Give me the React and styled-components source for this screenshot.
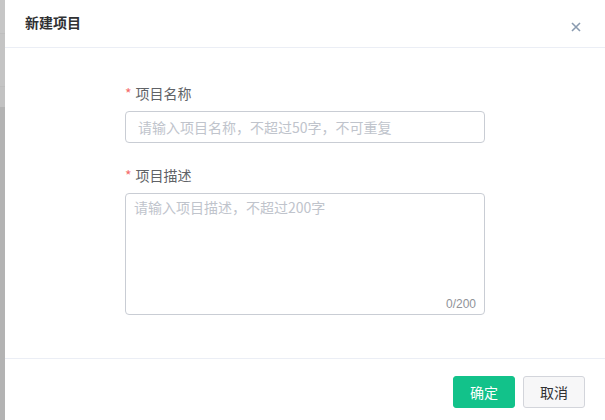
import React from "react";
import styled, { createGlobalStyle } from "styled-components";

const GlobalStyle = createGlobalStyle`
  html, body {
    margin: 0;
    padding: 0;
    background: #ffffff;
  }
  body {
    font-family: "Noto Sans CJK SC", "Noto Sans", "Liberation Sans", sans-serif;
  }
`;

const Page = styled.div`
  display: flex;
  width: 605px;
  height: 420px;
  overflow: hidden;
`;

const Backdrop = styled.div`
  width: 5px;
  flex-shrink: 0;
  background: linear-gradient(
    to bottom,
    #c6c6c6 0,
    #c6c6c6 33px,
    #b8b8b8 33px,
    #c4c4c4 34px,
    #c4c4c4 86px,
    #b8b8b8 86px,
    #c2c2c2 87px,
    #c2c2c2 107px,
    #b3b3b3 107px,
    #b3b3b3 100%
  );
`;

const Dialog = styled.div`
  flex: 1;
  display: flex;
  flex-direction: column;
  background: #ffffff;
`;

const Header = styled.div`
  display: flex;
  align-items: center;
  justify-content: space-between;
  height: 47px;
  padding: 0 23px 0 20px;
  border-bottom: 1px solid #ebeef5;
`;

const Title = styled.div`
  font-size: 14px;
  font-weight: bold;
  color: #303133;
  line-height: 20px;
  margin-top: -3px;
`;

const Close = styled.button`
  display: flex;
  align-items: center;
  justify-content: center;
  width: 12px;
  height: 12px;
  padding: 0;
  margin-top: 6px;
  border: none;
  background: none;
  cursor: pointer;
`;

const Body = styled.div`
  flex: 1;
  display: flex;
  justify-content: center;
  padding-top: 35px;
`;

const Form = styled.div`
  display: flex;
  flex-direction: column;
  width: 360px;
`;

const Field = styled.div`
  display: flex;
  flex-direction: column;
  margin-bottom: ${(p) => p.$gap || 0}px;
`;

const Label = styled.label`
  font-size: 14px;
  line-height: 20px;
  color: #606266;
  margin-bottom: 8px;
  &::before {
    content: "*";
    color: #f56c6c;
    margin-right: 4px;
  }
`;

const Input = styled.input`
  box-sizing: border-box;
  height: 32px;
  width: 100%;
  padding: 0 12px;
  border: 1px solid #c9cdd4;
  border-radius: 4px;
  font-family: inherit;
  font-size: 14px;
  color: #606266;
  outline: none;
  &::placeholder {
    color: #c0c4cc;
  }
`;

const AreaWrap = styled.div`
  position: relative;
`;

const TextArea = styled.textarea`
  display: block;
  box-sizing: border-box;
  width: 100%;
  height: 122px;
  padding: 3px 8px;
  border: 1px solid #c9cdd4;
  border-radius: 4px;
  font-family: inherit;
  font-size: 14px;
  line-height: 20px;
  color: #606266;
  resize: none;
  outline: none;
  &::placeholder {
    color: #c0c4cc;
  }
`;

const Count = styled.span`
  position: absolute;
  right: 9px;
  bottom: 4px;
  font-family: "Liberation Sans", Arial, sans-serif;
  font-size: 12px;
  line-height: 14px;
  color: #909399;
`;

const Footer = styled.div`
  display: flex;
  justify-content: flex-end;
  gap: 8px;
  padding: 17px 20px 12px;
  border-top: 1px solid #ebeef5;
`;

const Button = styled.button`
  box-sizing: border-box;
  width: 62px;
  height: 32px;
  border-radius: 3px;
  font-family: inherit;
  font-size: 14px;
  cursor: pointer;
  border: 1px solid ${(p) => (p.$primary ? "#12c28a" : "#d3d5db")};
  background: ${(p) => (p.$primary ? "#12c28a" : "#f7f7f8")};
  color: ${(p) => (p.$primary ? "#ffffff" : "#303133")};
`;

const CloseIcon = () => (
  <svg width="10" height="10" viewBox="0 0 10 10">
    <path d="M1 1L9 9M9 1L1 9" stroke="#8a9bb0" strokeWidth="1.6" />
  </svg>
);

export default function App() {
  return (
    <Page>
      <GlobalStyle />
      <Backdrop />
      <Dialog>
        <Header>
          <Title>新建项目</Title>
          <Close aria-label="关闭">
            <CloseIcon />
          </Close>
        </Header>
        <Body>
          <Form>
            <Field $gap={22}>
              <Label>项目名称</Label>
              <Input placeholder="请输入项目名称，不超过50字，不可重复" />
            </Field>
            <Field>
              <Label>项目描述</Label>
              <AreaWrap>
                <TextArea placeholder="请输入项目描述，不超过200字" />
                <Count>0/200</Count>
              </AreaWrap>
            </Field>
          </Form>
        </Body>
        <Footer>
          <Button $primary>确定</Button>
          <Button>取消</Button>
        </Footer>
      </Dialog>
    </Page>
  );
}
